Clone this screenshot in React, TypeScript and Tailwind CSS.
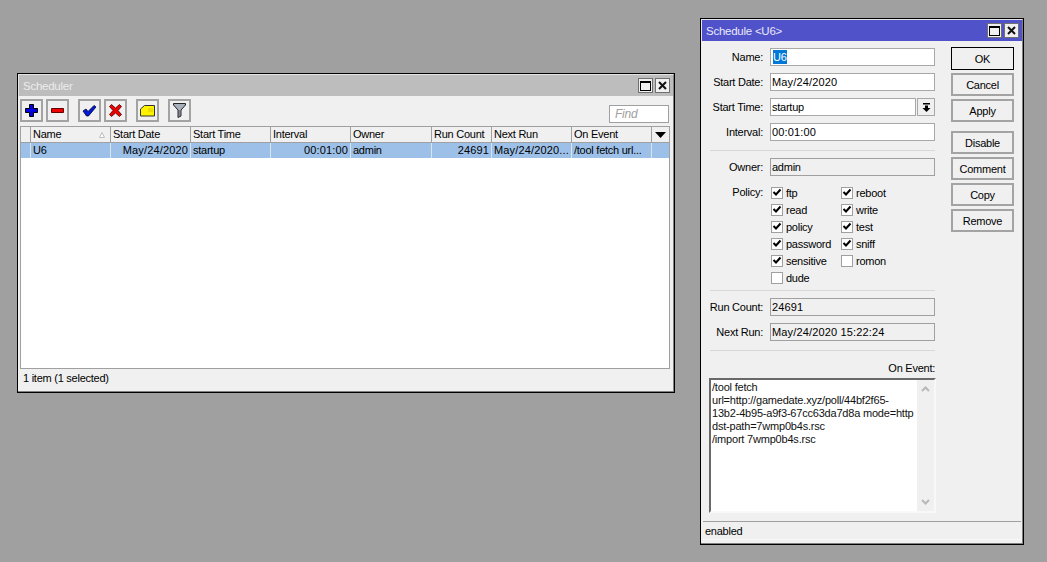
import React from "react";

const font = { fontFamily: '"Liberation Sans", Arial, sans-serif' };

function WinButtons() {
  return (
    <div className="flex gap-[2px] items-center">
      <div className="w-[15px] h-[15px] border border-[#707070] bg-[#f0f0f0] flex items-center justify-center">
        <div className="w-[11px] h-[10px] border border-black border-t-2" />
      </div>
      <div className="w-[15px] h-[15px] border border-[#707070] bg-[#f0f0f0] flex items-center justify-center">
        <svg width="9" height="9" viewBox="0 0 9 9"><path d="M1 1 L8 8 M8 1 L1 8" stroke="#111" strokeWidth="2" /></svg>
      </div>
    </div>
  );
}

function ToolBtn({ children, className = "" }: { children: React.ReactNode; className?: string }) {
  return (
    <div className={"w-[23px] h-[23px] border-2 border-[#a3a3a3] bg-[#f0f0f0] flex items-center justify-center " + className}>
      {children}
    </div>
  );
}

const cols: { t: string; c: string; w: string; r?: boolean; n?: boolean }[] = [
  { t: "Name", c: "U6", w: "w-[80px]" },
  { t: "Start Date", c: "May/24/2020", w: "w-[80px]", r: true, n: true },
  { t: "Start Time", c: "startup", w: "w-[80px]" },
  { t: "Interval", c: "00:01:00", w: "w-[80px]", r: true, n: true },
  { t: "Owner", c: "admin", w: "w-[81px]" },
  { t: "Run Count", c: "24691", w: "w-[60px]", r: true, n: true },
  { t: "Next Run", c: "May/24/2020...", w: "w-[80px]", n: true },
  { t: "On Event", c: "/tool fetch url...", w: "w-[80px]" },
];

function Scheduler() {
  return (
    <div className="absolute left-[17px] top-[73px] w-[658px] h-[320px] border border-black bg-[#f0f0f0] flex flex-col text-[11px] tracking-[-0.25px] shadow-[inset_-1px_-1px_0_#808080]">
      <div className="h-[22px] shrink-0 bg-[#bdbdbd] border-t border-l border-[#e4e4e4] border-r border-r-[#808080] flex items-center justify-between pl-[4px] pr-[3px]">
        <span className="text-[#ececec] text-[11.5px] pt-[2px]">Scheduler</span>
        <WinButtons />
      </div>
      <div className="h-[30px] shrink-0 flex items-center pl-[2px] pr-[5px] pb-[1px]">
        <ToolBtn>
          <svg width="15" height="15" viewBox="0 0 15 15"><path d="M5.5 1.5h4v4h4v4h-4v4h-4v-4h-4v-4h4z" fill="#0000e0" stroke="#000" strokeWidth="1" /></svg>
        </ToolBtn>
        <ToolBtn className="ml-[3px]">
          <svg width="15" height="9" viewBox="0 0 15 9"><path d="M1.5 2.5h12v4h-12z" fill="#ee0000" stroke="#600" strokeWidth="1" /></svg>
        </ToolBtn>
        <ToolBtn className="ml-[9px]">
          <svg width="15" height="13" viewBox="0 0 15 13"><path d="M1 7 L4 5 L6 7.5 L12 1.5 L14 3 L6.5 12 L4.5 12 Z" fill="#0018d8" stroke="#000030" strokeWidth="0.8" /></svg>
        </ToolBtn>
        <ToolBtn className="ml-[3px]">
          <svg width="15" height="15" viewBox="0 0 15 15"><path d="M1.5 3.5 L3.5 1.5 L7.5 5 L11.5 1.5 L13.5 3.5 L10 7.5 L13.5 11.5 L11.5 13.5 L7.5 10 L3.5 13.5 L1.5 11.5 L5 7.5 Z" fill="#ee0000" stroke="#400" strokeWidth="0.8" /></svg>
        </ToolBtn>
        <ToolBtn className="ml-[9px]">
          <svg width="15" height="12" viewBox="0 0 15 12"><path d="M4.5 0.5h10v10.5h-14v-7z" fill="#fff200" stroke="#333" strokeWidth="1" /><path d="M8 4h5M8 6h5" stroke="#d8c800" strokeWidth="1" /></svg>
        </ToolBtn>
        <ToolBtn className="ml-[9px]">
          <svg width="13" height="15" viewBox="0 0 13 15"><path d="M0.5 0.5h12v1.5L8 7v6l-3 1.5V7L0.5 2z" fill="#a8b0bc" stroke="#222" strokeWidth="1" /><path d="M6 7v6" stroke="#556" strokeWidth="1" /></svg>
        </ToolBtn>
        <div className="ml-auto w-[60px] h-[18px] mt-[6px] bg-white border border-[#a0a0a0] pl-[5px] text-[12px] leading-[16px] italic text-[#a0a0a0]">Find</div>
      </div>
      <div className="ml-[2px] mr-[4px] flex-1 bg-white border-x border-b border-[#a0a0a0] min-h-0 flex flex-col">
        <div className="flex h-[17px] shrink-0 bg-[#f0f0f0] border-t border-b border-[#a0a0a0] leading-[15px]">
          <div className="w-[10px] border-r border-[#a0a0a0]" />
          {cols.map((c) => (
            <div key={c.t} className={c.w + " border-r border-[#a0a0a0] pl-[2px] relative whitespace-nowrap"}>
              {c.t}
              {c.t === "Name" && (
                <svg className="absolute right-[5px] top-[5px]" width="6" height="6" viewBox="0 0 6 6"><path d="M3 .5 L5.5 5.5 H.5 Z" fill="#fff" stroke="#b0b0b0" strokeWidth="0.8" /></svg>
              )}
            </div>
          ))}
          <div className="flex-1 flex items-center justify-center">
            <svg width="11" height="6" viewBox="0 0 11 6"><path d="M0 0h11L5.5 6z" fill="#000" /></svg>
          </div>
        </div>
        <div className="flex h-[15px] shrink-0 bg-[#9dc0e8] leading-[15px]">
          <div className="w-[10px] border-r border-[#d8e4f0]" />
          {cols.map((c) => (
            <div key={c.t} className={c.w + " border-r border-[#d8e4f0] px-[2px] whitespace-nowrap overflow-hidden " + (c.r ? "text-right " : "") + (c.n ? "tracking-[0.15px]" : "")}>{c.c}</div>
          ))}
        </div>
      </div>
      <div className="h-[23px] shrink-0 mx-[2px] pl-[3px] leading-[18px]">1 item (1 selected)</div>
    </div>
  );
}

function Field({ label, value, readOnly, select, selected, num }: { label: string; value: string; readOnly?: boolean; select?: boolean; selected?: boolean; num?: boolean }) {
  return (
    <div className="flex h-[18px] items-center">
      <div className="w-[57px] text-right shrink-0 pt-[1px]">{label}:</div>
      <div className={"ml-[7px] h-[18px] border leading-[17px] whitespace-nowrap " + (readOnly ? "bg-[#f0f0f0] border-[#a0a0a0] " : "bg-white border-[#a8a8a8] ") + (select ? "w-[146px] pl-[1px] " : "w-[165px] pl-[1px] ") + (num ? "tracking-[0.15px]" : "")}>
        {selected ? <span className="bg-[#0078d7] text-white inline-block leading-[14px] ml-[1px]">{value}</span> : value}
      </div>
      {select && (
        <div className="ml-px w-[18px] h-[18px] border border-[#a8a8a8] bg-[#f0f0f0] flex items-center justify-center">
          <svg width="9" height="9" viewBox="0 0 9 9"><path d="M1 0h7v1.5H1z M3 2.5h3V5h2.5L4.5 9 .5 5H3z" fill="#000" /></svg>
        </div>
      )}
    </div>
  );
}

function Check({ label, on }: { label: string; on: boolean }) {
  return (
    <div className="flex items-center h-[17px]">
      <div className="w-[12px] h-[12px] border border-[#a0a0a0] bg-white flex items-center justify-center">
        {on && <svg width="10" height="9" viewBox="0 0 10 9"><path d="M1.5 4 L4 6.5 L8.5 1.5" fill="none" stroke="#000" strokeWidth="2" /></svg>}
      </div>
      <span className="ml-[3px] pt-[1px]">{label}</span>
    </div>
  );
}

function Btn({ t, primary, className = "" }: { t: string; primary?: boolean; className?: string }) {
  return (
    <div className={"w-[63px] h-[23px] flex items-center justify-center bg-[#f0f0f0] pt-[1px] " + (primary ? "border border-black " : "border-2 border-[#a3a3a3] ") + className}>{t}</div>
  );
}

const Sep = () => <div className="h-px w-[225px] ml-[9px] bg-[#d8d8d8]" />;

function Schedule() {
  return (
    <div className="absolute left-[700px] top-[18px] w-[324px] h-[527px] border border-black bg-[#f0f0f0] flex flex-col text-[11px] tracking-[-0.25px] shadow-[inset_-1px_-1px_0_#808080]">
      <div className="h-[22px] shrink-0 bg-[#4f52c9] border-t border-l border-[#e4e4e4] border-r border-r-[#808080] flex items-center justify-between pl-[4px] pr-[3px]">
        <span className="text-[#e8e8f8] text-[11.5px] pt-[2px]">Schedule &lt;U6&gt;</span>
        <WinButtons />
      </div>
      <div className="flex flex-1 min-h-0 relative">
        <div className="w-[250px] shrink-0 flex flex-col pt-[7px]">
          <div className="flex flex-col gap-[7px] ml-[5px]">
            <Field label="Name" value="U6" selected />
            <Field label="Start Date" value="May/24/2020" num />
            <Field label="Start Time" value="startup" select />
            <Field label="Interval" value="00:01:00" num />
          </div>
          <div className="mt-[9px]"><Sep /></div>
          <div className="mt-[7px] ml-[5px]"><Field label="Owner" value="admin" readOnly /></div>
          <div className="flex mt-[8px] ml-[5px]">
            <div className="w-[57px] text-right leading-[17px]">Policy:</div>
            <div className="ml-[8px] w-[70px] flex flex-col">
              {[["ftp", 1], ["read", 1], ["policy", 1], ["password", 1], ["sensitive", 1], ["dude", 0]].map(([l, o]) => (
                <Check key={l as string} label={l as string} on={!!o} />
              ))}
            </div>
            <div className="flex flex-col">
              {[["reboot", 1], ["write", 1], ["test", 1], ["sniff", 1], ["romon", 0]].map(([l, o]) => (
                <Check key={l as string} label={l as string} on={!!o} />
              ))}
            </div>
          </div>
          <div className="mt-[4px]"><Sep /></div>
          <div className="flex flex-col gap-[7px] mt-[7px] ml-[5px]">
            <Field label="Run Count" value="24691" readOnly num />
            <Field label="Next Run" value="May/24/2020 15:22:24" readOnly num />
          </div>
          <div className="mt-[9px]"><Sep /></div>
          <div className="w-[234px] text-right mt-[9px] h-[18px] leading-[17px]">On Event:</div>
          <div className="ml-[8px] w-[227px] h-[135px] bg-white border-2 border-t-[#696969] border-l-[#696969] border-r-[#f8f8f8] border-b-[#f8f8f8] flex tracking-[-0.2px]">
            <div className="flex-1 min-w-0 overflow-hidden pl-px leading-[13px] pt-[1px] whitespace-pre text-[#111]">{"/tool fetch\nurl=http://gamedate.xyz/poll/44bf2f65-\n13b2-4b95-a9f3-67cc63da7d8a mode=http\ndst-path=7wmp0b4s.rsc\n/import 7wmp0b4s.rsc"}</div>
            <div className="w-[17px] shrink-0 bg-[#f0f0f0] flex flex-col justify-between items-center py-[6px]">
              <svg width="9" height="6" viewBox="0 0 9 6"><path d="M1 5 L4.5 1.5 L8 5" fill="none" stroke="#b8b8b8" strokeWidth="2" /></svg>
              <svg width="9" height="6" viewBox="0 0 9 6"><path d="M1 1 L4.5 4.5 L8 1" fill="none" stroke="#b8b8b8" strokeWidth="2" /></svg>
            </div>
          </div>
        </div>
        <div className="flex flex-col pt-[6px]">
          <Btn t="OK" primary />
          <Btn t="Cancel" className="mt-[3px]" />
          <Btn t="Apply" className="mt-[3px]" />
          <Btn t="Disable" className="mt-[9px]" />
          <Btn t="Comment" className="mt-[3px]" />
          <Btn t="Copy" className="mt-[3px]" />
          <Btn t="Remove" className="mt-[3px]" />
        </div>
      </div>
      <div className="h-[19px] mx-[2px] mb-[4px] shrink-0 border-t border-[#a0a0a0] border-b border-b-[#f8f8f8] pl-[2px] leading-[18px]">enabled</div>
    </div>
  );
}

export default function App() {
  return (
    <div className="relative w-[1047px] h-[562px] bg-[#a0a0a0] overflow-hidden text-black" style={font}>
      <Scheduler />
      <Schedule />
    </div>
  );
}
